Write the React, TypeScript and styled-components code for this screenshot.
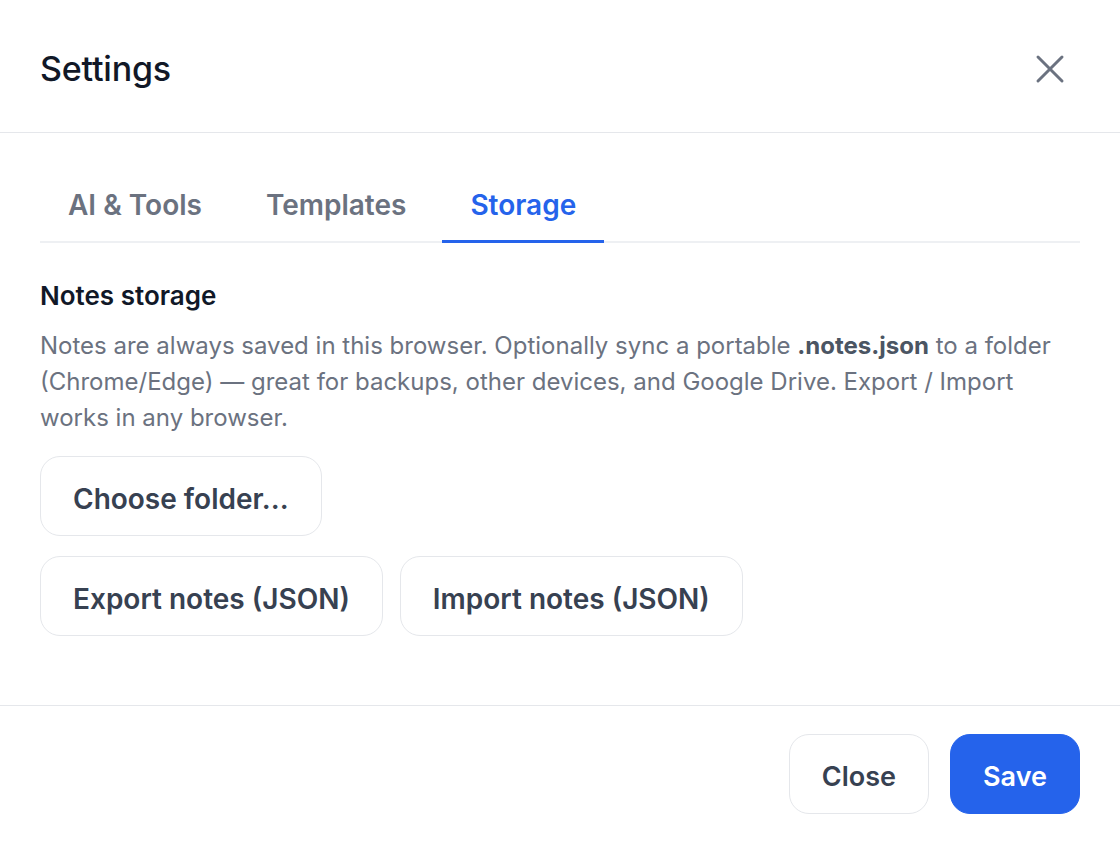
import React, { useState } from 'react'
import styled, { createGlobalStyle } from 'styled-components'

const GlobalStyle = createGlobalStyle`
  html, body {
    margin: 0;
    padding: 0;
    background: #ffffff;
  }
  body {
    font-family: Inter, "Noto Sans", "Liberation Sans", sans-serif;
    -webkit-font-smoothing: antialiased;
  }
`

const Dialog = styled.div`
  width: 1120px;
  height: 844px;
  display: flex;
  flex-direction: column;
  background: #ffffff;
  box-sizing: border-box;
`

const Header = styled.header`
  height: 133px;
  box-sizing: border-box;
  padding: 5px 40px 0;
  display: flex;
  align-items: center;
  justify-content: space-between;
  border-bottom: 1px solid #e5e7eb;
`

const Title = styled.h1`
  margin: 0;
  font-size: 34px;
  font-weight: 500;
  color: #111827;
  letter-spacing: -0.2px;
`

const IconButton = styled.button`
  width: 48px;
  height: 48px;
  margin-right: 6px;
  border: none;
  background: transparent;
  display: flex;
  align-items: center;
  justify-content: center;
  color: #6b7280;
  cursor: pointer;
  padding: 0;
`

const Body = styled.main`
  flex: 1;
  padding: 35px 40px 0;
  display: flex;
  flex-direction: column;
  border-bottom: 1px solid #e5e7eb;
`

const TabList = styled.div`
  display: flex;
  gap: 8px;
  border-bottom: 2px solid #eef0f3;
`

const Tab = styled.button<{ $active?: boolean }>`
  border: none;
  background: transparent;
  padding: 20px 28px 18px;
  margin-bottom: -2px;
  font-family: inherit;
  font-size: 28px;
  font-weight: 600;
  color: ${(p) => (p.$active ? '#2563eb' : '#6b7280')};
  border-bottom: 3px solid ${(p) => (p.$active ? '#2563eb' : 'transparent')};
  cursor: pointer;
`

const Section = styled.section`
  padding-top: 38px;
  display: flex;
  flex-direction: column;
`

const SectionTitle = styled.h2`
  margin: 0 0 17px;
  font-size: 26px;
  line-height: 30px;
  font-weight: 600;
  color: #111827;
`

const Description = styled.p`
  margin: 0 0 20px;
  font-size: 24px;
  line-height: 36px;
  color: #6b7280;

  b {
    color: #4b5563;
    font-weight: 700;
  }
`

const ButtonRow = styled.div`
  display: flex;
  gap: 17px;
  margin-bottom: 20px;
`

const Button = styled.button<{ $primary?: boolean; $small?: boolean }>`
  height: 80px;
  padding: 5px 32px 0;
  border-radius: 20px;
  font-family: inherit;
  font-size: ${(p) => (p.$small ? 27 : 28)}px;
  font-weight: 600;
  cursor: pointer;
  border: 1px solid ${(p) => (p.$primary ? '#2563eb' : '#e5e7eb')};
  background: ${(p) => (p.$primary ? '#2563eb' : '#ffffff')};
  color: ${(p) => (p.$primary ? '#ffffff' : '#374151')};
`

const Footer = styled.footer`
  height: 138px;
  box-sizing: border-box;
  padding: 28px 40px 0;
  display: flex;
  justify-content: flex-end;
  align-items: flex-start;
  gap: 21px;
`

const CloseIcon = () => (
  <svg width="48" height="48" viewBox="0 0 24 24" fill="none" stroke="currentColor" strokeWidth="1.5" strokeLinecap="round">
    <path d="M18 6 6 18" />
    <path d="m6 6 12 12" />
  </svg>
)

const tabs = ['AI & Tools', 'Templates', 'Storage']

export default function App() {
  const [active, setActive] = useState('Storage')
  return (
    <>
      <GlobalStyle />
      <Dialog>
        <Header>
          <Title>Settings</Title>
          <IconButton aria-label="Close">
            <CloseIcon />
          </IconButton>
        </Header>
        <Body>
          <TabList>
            {tabs.map((t) => (
              <Tab key={t} $active={t === active} onClick={() => setActive(t)}>
                {t}
              </Tab>
            ))}
          </TabList>
          <Section>
            <SectionTitle>Notes storage</SectionTitle>
            <Description>
              Notes are always saved in this browser. Optionally sync a portable <b>.notes.json</b> to a folder
              (Chrome/Edge) — great for backups, other devices, and Google Drive. Export / Import works in any
              browser.
            </Description>
            <ButtonRow>
              <Button>Choose folder...</Button>
            </ButtonRow>
            <ButtonRow>
              <Button>Export notes (JSON)</Button>
              <Button>Import notes (JSON)</Button>
            </ButtonRow>
          </Section>
        </Body>
        <Footer>
          <Button $small>Close</Button>
          <Button $small $primary>Save</Button>
        </Footer>
      </Dialog>
    </>
  )
}
